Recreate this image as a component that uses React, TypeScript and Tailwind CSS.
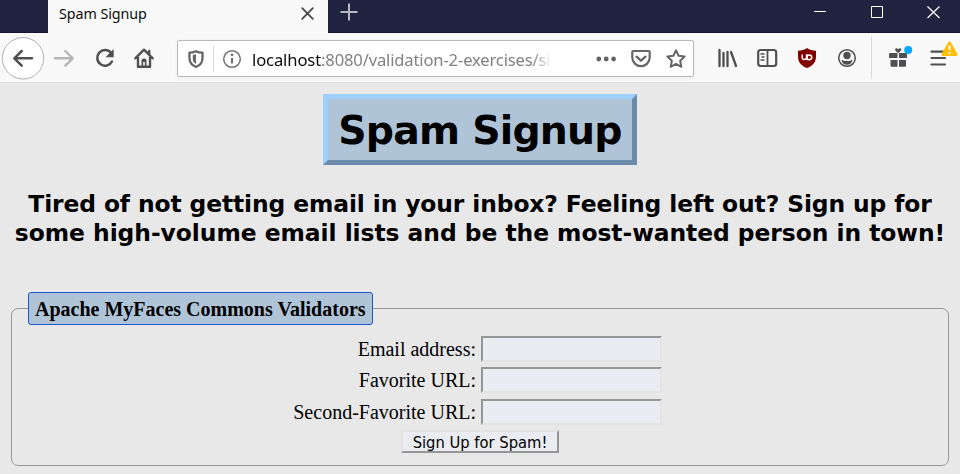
import React from "react";

const line = {
  fill: "none",
  stroke: "#505052",
  strokeWidth: 2.2,
  strokeLinecap: "round" as const,
  strokeLinejoin: "round" as const,
};

function TitleBar() {
  return (
    <div className="flex h-[33px] border-b border-[#15172f] bg-[#20233f] pl-12">
      <div className="flex h-[33px] w-[280px] items-start bg-[#f9f9fa] pl-[11px]">
        <span className="w-[241px] pt-[4px] text-[14.3px] leading-[20px] tracking-[-0.07px] text-[#0c0c0d]">
          Spam Signup
        </span>
        <svg className="mt-[6px] h-4 w-4" viewBox="0 0 16 16">
          <path d="M2.2 2.2l10.6 10.6M12.8 2.2L2.2 12.8" {...line} strokeWidth={1.8} stroke="#48484a" />
        </svg>
      </div>
      <svg className="ml-[12px] mt-[3px] h-[18px] w-[18px]" viewBox="0 0 18 18">
        <path d="M9 .5v17M.5 9h17" {...line} stroke="#b7b8c2" strokeWidth={2} strokeLinecap="butt" />
      </svg>
      <svg className="ml-auto h-6 w-[150px]" viewBox="0 0 150 24" fill="none" stroke="#fff">
        <path d="M4 11.5h12" />
        <path d="M61.500 6.500h11v11h-11z" />
        <path d="M117.500 6.500l12 11.500M129.500 6.500l-12 11.500" strokeWidth={1.2} />
      </svg>
    </div>
  );
}

function AddressBar() {
  return (
    <div className="ml-[23px] flex h-[37px] w-[517px] items-center rounded-[2px] border border-[#b9b9ba] bg-white shadow-[0_1px_4px_rgba(0,0,0,0.05)]">
      <svg className="ml-[10px] h-5 w-4 shrink-0" viewBox="0 0 16 20">
        <path d="M8 2.200C6 3.200 4 3.600 1.500 3.600V9c0 4.500 2.500 7.500 6.500 9 4-1.500 6.500-4.500 6.500-9V3.600C12 3.600 10 3.200 8 2.200z" {...line} stroke="#666668" strokeWidth={2.3} />
        <path d="M8 5.300v9.500c-2.200-1.200-3.200-3-3.200-5.400V6z" fill="#666668" />
      </svg>
      <div className="ml-[9px] h-[26px] w-px bg-[#dededf]" />
      <svg className="ml-[8px] h-5 w-5 shrink-0" viewBox="0 0 20 20">
        <circle cx="10" cy="10" r="8.300" fill="none" stroke="#737375" strokeWidth="1.500" />
        <circle cx="10" cy="5.900" r="1.300" fill="#737375" />
        <path d="M10 9v5.500" stroke="#737375" strokeWidth="2.200" />
      </svg>
      <div className="ml-[10px] h-[27px] w-[304px] whitespace-nowrap pt-[3px] text-[16.6px] leading-[24px] text-[#818184] [mask-image:linear-gradient(to_right,black_280px,transparent_300px)]">
        <span className="tracking-[-0.12px] text-[#0c0c0d]">localhost</span>
        <span className="tracking-[-0.16px]">:8080/validation-2-exercises/si</span>
      </div>
      <svg className="ml-[40px] h-6 w-5 shrink-0" viewBox="0 0 20 24" fill="#666668">
        <circle cx="2.800" cy="12" r="2.400" />
        <circle cx="10.200" cy="12" r="2.400" />
        <circle cx="17.600" cy="12" r="2.400" />
      </svg>
      <svg className="ml-[15px] h-6 w-5 shrink-0" viewBox="0 0 20 24">
        <path d="M2.300 4h15.400q1 0 1 1v5.500a8.700 8.700 0 0 1-17.400 0V5q0-1 1-1z" {...line} stroke="#666668" />
        <path d="M5.500 9.700L10 13.700l4.500-4" {...line} stroke="#666668" strokeWidth={2.300} />
      </svg>
      <svg className="ml-[15px] h-6 w-5 shrink-0" viewBox="0 0 20 24">
        <path d="M10 3.200l2.600 5.500 6 .8-4.400 4.200 1.100 6.100L10 16.900l-5.300 2.900 1.100-6.100L1.400 9.500l6-.8z" {...line} stroke="#666668" strokeWidth={2} />
      </svg>
    </div>
  );
}

function Toolbar() {
  return (
    <div className="flex h-[50px] border-b border-[#dfdfe0] bg-[#f9f9fa]">
      <div className="flex h-[50px] w-[177px] shrink-0 items-center">
        <svg className="h-[50px] w-[177px]" viewBox="0 0 177 50">
          <circle cx="23" cy="25.300" r="20.700" fill="#fff" stroke="#b1b1b2" />
          <path d="M32 25.300H14.500M21.700 18l-7.400 7.300 7.400 7.300" {...line} strokeWidth={2.500} />
          <path d="M55 25.300h17.500M65.300 18l7.400 7.300-7.400 7.300" {...line} stroke="#b6b6b7" strokeWidth={2.400} />
          <path d="M111 19.800a7.800 7.800 0 1 0 1 8.700" {...line} strokeWidth={2.500} />
          <path d="M113.700 16v8.200h-8.200z" fill="#505052" />
          <path d="M135.300 25.300l8.700-8.600 8.700 8.600M138 24v9.800h12V24M149.200 18v3" {...line} strokeWidth={2.400} />
          <path d="M141.500 34v-7q0-1.500 2.500-1.500t2.500 1.500v7h-1.700v-5h-1.600v5z" fill="#505052" />
        </svg>
      </div>
      <div className="-ml-[23px] flex w-[540px] shrink-0 pt-[7px]">
        <AddressBar />
      </div>
      <svg className="ml-[23px] h-[50px] w-[243px] shrink-0" viewBox="717 33 243 50">
        <path d="M719.500 50v16.200M723.500 53v13.200M727.500 52v14.200M731 52l5 14" {...line} strokeWidth={2.300} />
        <rect x="758.200" y="50" width="18" height="16" rx="2.500" {...line} />
        <path d="M767.500 50v16" {...line} strokeWidth={1.800} />
        <path d="M760.500 54h4M761.500 57h3M760.500 60h4" stroke="#505052" strokeWidth="1.300" />
        <path d="M807 48c2.500 1.800 5.500 2.600 9 2.700v5.800c0 6-3.500 9.500-9 11.500-5.500-2-9-5.500-9-11.500v-5.800c3.500-.1 6.500-.9 9-2.700z" fill="#800000" />
        <path d="M802.200 54.500v3.300a2.200 2.200 0 0 0 4.300 0v-3.300" fill="none" stroke="#fff" strokeWidth="1.500" />
        <path d="M807 54.300v6" stroke="#fff" strokeWidth="1.300" />
        <circle cx="809.300" cy="57.300" r="2.400" fill="none" stroke="#fff" strokeWidth="1.500" />
        <circle cx="847" cy="58" r="8.300" fill="none" stroke="#505052" strokeWidth="1.500" />
        <circle cx="847" cy="55.500" r="3.700" fill="#505052" />
        <path d="M841.500 59.800c1 .1 2 .5 2.500 1.200h6c.5-.7 1.500-1.100 2.500-1.200-.3 3-2.500 5-5.500 5s-5.200-2-5.500-5z" fill="#505052" />
        <path d="M871.500 37v42" stroke="#dadadb" />
        <path d="M889 58v-4q0-1 1-1h7.500v5zM899 53h7q1 0 1 1v4h-8zM890.500 60h7v6.800h-6q-1 0-1-1zM899 60h7v5.800q0 1-1 1h-6z" fill="#505052" />
        <path d="M898.200 53c-2.200-1.100-3.400-2.600-3-4 .5-1.100 2.200-1 3 .3.800-1.300 2.500-1.400 3-.3.400 1.400-.8 2.900-3 4z" fill="#505052" />
        <circle cx="908.200" cy="50" r="4" fill="#00a7fc" />
        <path d="M931.500 51.700h14M931.500 58h13.500M931.500 64.500h13.500" {...line} />
        <path d="M949.500 43.100l6.500 11.400h-13z" fill="#ffbf00" stroke="#ffbf00" strokeWidth="3" strokeLinejoin="round" />
        <path d="M949.500 45.500v4.500M949.500 52v2" stroke="#fff" strokeWidth="2" />
      </svg>
    </div>
  );
}

function Field({ label, row }: { label: string; row: string }) {
  return (
    <div className={"flex " + row}>
      <label className="w-[464px] pt-[2px] text-right text-[20px] leading-[22px]">{label}</label>
      <input className="ml-[5px] h-[26px] w-[181px] border-2 border-t-[#969696] border-l-[#969696] border-r-[#e3e3e3] border-b-[#e3e3e3] bg-[#ebecf2] outline-none" />
    </div>
  );
}

export default function App() {
  return (
    <div className="h-[474px] w-[960px] overflow-hidden bg-[#e8e8e8] text-black">
      <header className="font-['Noto_Sans','Open_Sans',sans-serif]">
        <TitleBar />
        <Toolbar />
      </header>
      <main className="pt-[11px]">
        <h1 className="mx-auto h-[71px] w-[314px] whitespace-nowrap border-5 border-t-[#9dcfff] border-l-[#9dcfff] border-r-[#6b8baa] border-b-[#6b8baa] bg-[#b0c4d8] pt-[7px] text-center font-['Verdana','DejaVu_Sans',sans-serif] text-[39.4px] leading-[49px] font-bold tracking-[-0.8px]">
          Spam Signup
        </h1>
        <h2 className="mt-[25px] whitespace-nowrap text-center font-['Verdana','DejaVu_Sans',sans-serif] text-[23.4px] leading-[29px] font-bold tracking-[-0.04px]">
          <span className="tracking-[-0.11px]">
            Tired of not getting email in your inbox? Feeling left out? Sign up for
          </span>
          <br />
          some high-volume email lists and be the most-wanted person in town!
        </h2>
        <fieldset className="mx-[11px] mt-[44px] h-[174px] rounded-[7px] border border-[#979797] font-['Liberation_Serif',serif]">
          <legend className="ml-4 h-[33px] w-[345px] whitespace-nowrap rounded-[3px] border border-[#1c58c8] bg-[#b0c4d8] pl-[6px] pt-[5px] text-[20px] leading-[22px] font-bold">
            Apache MyFaces Commons Validators
          </legend>
          <div className="pt-[11px]">
            <Field label="Email address:" row="h-[31px]" />
            <Field label="Favorite URL:" row="h-[32px]" />
            <Field label="Second-Favorite URL:" row="h-[31px]" />
            <button className="ml-[389px] block h-[23px] w-[158px] whitespace-nowrap border-2 border-t-[#e3e3e3] border-l-[#e3e3e3] border-r-[#969696] border-b-[#969696] bg-[#ebecf2] pt-px text-center font-['Tahoma','DejaVu_Sans_Condensed','DejaVu_Sans',sans-serif] text-[16.4px] leading-[20px]">
              Sign Up for Spam!
            </button>
          </div>
        </fieldset>
      </main>
    </div>
  );
}
